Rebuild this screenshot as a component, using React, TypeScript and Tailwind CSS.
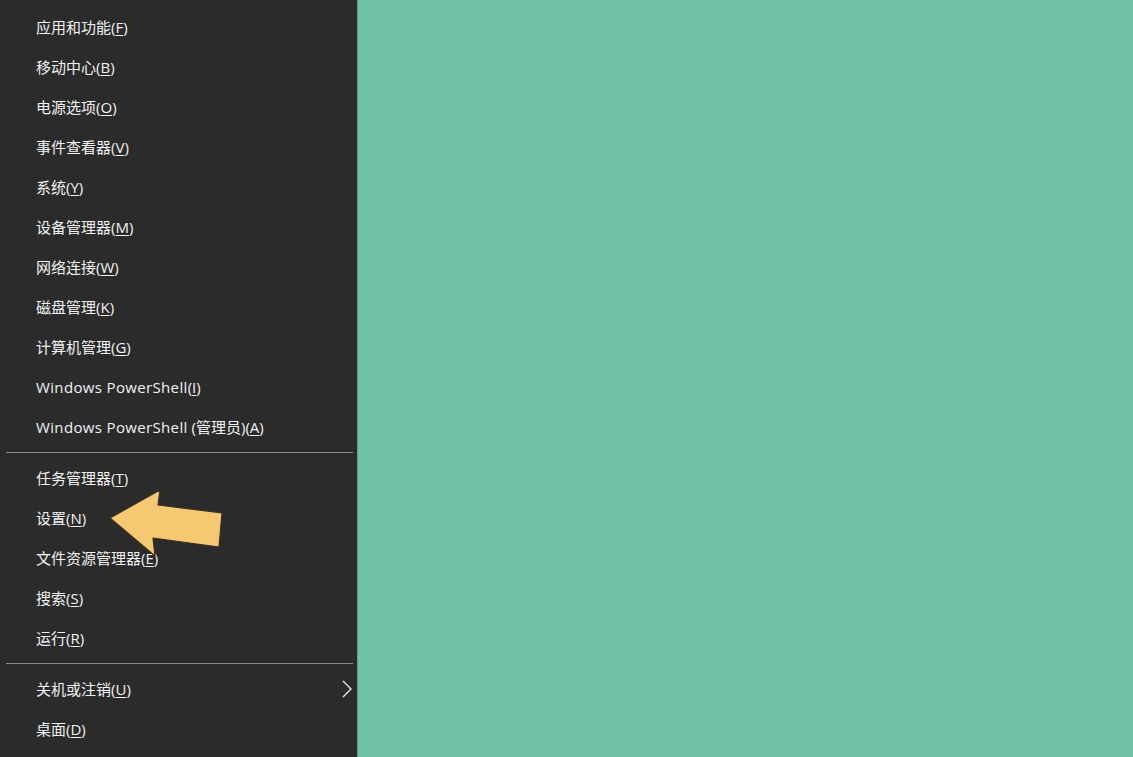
import React from 'react'

type Item = { label: string; key: string; sub?: boolean }

const groups: Item[][] = [
  [
    { label: '应用和功能', key: 'F' },
    { label: '移动中心', key: 'B' },
    { label: '电源选项', key: 'O' },
    { label: '事件查看器', key: 'V' },
    { label: '系统', key: 'Y' },
    { label: '设备管理器', key: 'M' },
    { label: '网络连接', key: 'W' },
    { label: '磁盘管理', key: 'K' },
    { label: '计算机管理', key: 'G' },
    { label: 'Windows PowerShell', key: 'I' },
    { label: 'Windows PowerShell (管理员)', key: 'A' },
  ],
  [
    { label: '任务管理器', key: 'T' },
    { label: '设置', key: 'N' },
    { label: '文件资源管理器', key: 'E' },
    { label: '搜索', key: 'S' },
    { label: '运行', key: 'R' },
  ],
  [
    { label: '关机或注销', key: 'U', sub: true },
    { label: '桌面', key: 'D' },
  ],
]

function Label({ text }: { text: string }) {
  // 拉丁文字稍宽一些，贴近 Segoe UI
  const m = text.match(/^(Windows PowerShell)(.*)$/)
  if (!m) return <>{text}</>
  return (
    <>
      <span className="tracking-[0.35px]">{m[1]}</span>
      {m[2]}
    </>
  )
}

function Row({ item }: { item: Item }) {
  return (
    <div className="h-10 flex items-center justify-between pl-9 pr-[4px] text-[15px] text-[#f2f2f2]">
      <span>
        <Label text={item.label} />(<span className="underline underline-offset-2">{item.key}</span>)
      </span>
      {item.sub && (
        <svg width="12" height="18" viewBox="0 0 12 18" fill="none" stroke="#e6e6e6" strokeWidth="1.4">
          <path d="M2 1 L10 9 L2 17" />
        </svg>
      )}
    </div>
  )
}

export default function App() {
  return (
    <div
      className="w-[1133px] h-[757px] flex bg-[#72c1a9] overflow-hidden relative"
      style={{ fontFamily: '"Open Sans", "Noto Sans CJK SC", sans-serif' }}
    >
      {/* 菜单面板 */}
      <div className="w-[357px] h-full bg-[#2b2b2b] flex flex-col pt-[7px]">
        {groups.map((g, gi) => (
          <div key={gi}>
            {gi > 0 && (
              <div className="py-[5px] pl-[6px] pr-[4px]">
                <div className="h-px bg-[#8a8a8a]" />
              </div>
            )}
            {g.map((item) => (
              <Row key={item.key} item={item} />
            ))}
          </div>
        ))}
      </div>
      <div className="flex-1 border-l border-[#5a9c88]" />

      {/* 黄色箭头 */}
      <svg className="absolute left-0 top-0 pointer-events-none" width="1133" height="757">
        <polygon
          points="110,518 160,490 158,505 222,513 219,547 153,538 155,556"
          fill="#f5c872"
          stroke="#3a3020"
          strokeWidth="1.2"
          strokeLinejoin="round"
        />
      </svg>
    </div>
  )
}
